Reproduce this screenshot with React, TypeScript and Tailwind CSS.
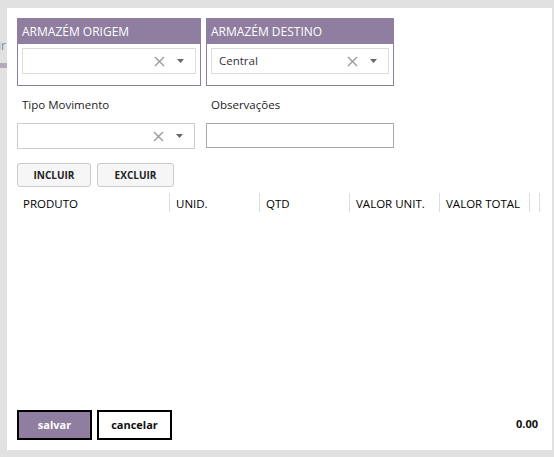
import React from 'react';

const font = { fontFamily: '"Open Sans", "Noto Sans", sans-serif' };

const ClearX = () => (
  <svg width="11" height="11" viewBox="0 0 11 11" className="text-[#9a9a9a]">
    <path d="M1 1 L10 10 M10 1 L1 10" stroke="currentColor" strokeWidth="1.4" />
  </svg>
);

const Caret = () => (
  <svg width="7" height="4" viewBox="0 0 7 4" className="text-[#666]">
    <path d="M0 0 H7 L3.5 4 Z" fill="currentColor" />
  </svg>
);

const SelectBox: React.FC<{ value?: string; className?: string }> = ({ value, className }) => (
  <div className={`flex items-center h-[26px] bg-white ${className ?? ''}`}>
    <span className="flex-1 pl-[7px] text-[11.5px] text-[#333] truncate">{value}</span>
    <ClearX />
    <span className="w-[30px] flex justify-center">
      <Caret />
    </span>
  </div>
);

const Panel: React.FC<{ title: string; value?: string; className?: string }> = ({ title, value, className }) => (
  <div className={`border border-[#8f7e9f] h-[68px] ${className ?? ''}`}>
    <div className="h-[25px] bg-[#8f7e9f] text-white text-[12px] pl-[4px] flex items-center">{title}</div>
    <div className="px-[4px] pt-[4px]">
      <SelectBox value={value} className="border border-[#dddddd]" />
    </div>
  </div>
);

const columns = [
  { label: 'PRODUTO', w: 'w-[153px]' },
  { label: 'UNID.', w: 'w-[90px]' },
  { label: 'QTD', w: 'w-[90px]' },
  { label: 'VALOR UNIT.', w: 'w-[90px]' },
  { label: 'VALOR TOTAL', w: 'w-[90px]' },
];

export default function App() {
  return (
    <div className="w-[554px] h-[457px] bg-[#e1e1e1] flex pt-[8px] pb-[7px] pr-[2px] overflow-hidden" style={font}>
      {/* page peeking behind modal */}
      <div className="w-[7px] overflow-hidden">
        <div className="mt-[29px] text-[12px] text-[#7a8a9a] -ml-[2px] whitespace-nowrap">ir</div>
        <div className="mt-[8px] h-[5px] bg-[#b3aabb]" />
      </div>

      <div className="flex-1 bg-white flex flex-col pl-[10px] pr-[11px] pt-[10px] pb-[10px]">
        {/* Warehouses */}
        <div className="flex gap-[5px]">
          <Panel title="ARMAZÉM ORIGEM" className="w-[184px]" />
          <Panel title="ARMAZÉM DESTINO" value="Central" className="w-[188px]" />
        </div>

        {/* Movement + notes */}
        <div className="flex gap-[11px] mt-[10px]">
          <div className="w-[178px]">
            <div className="h-[17px] pl-[5px] text-[11.5px] text-[#222] leading-[17px]">Tipo Movimento</div>
            <SelectBox className="mt-[10px] border border-[#cccccc]" />
          </div>
          <div className="w-[188px]">
            <div className="h-[17px] pl-[5px] text-[11.5px] text-[#222] leading-[17px]">Observações</div>
            <div className="mt-[10px] h-[25px] border border-[#aaaaaa]" />
          </div>
        </div>

        {/* Actions */}
        <div className="flex gap-[6px] mt-[14px]">
          <button className="w-[74px] h-[24px] rounded-[3px] bg-[#f6f6f6] border border-[#cccccc] text-[10px] font-bold text-[#222]">
            INCLUIR
          </button>
          <button className="w-[77px] h-[24px] rounded-[3px] bg-[#f6f6f6] border border-[#cccccc] text-[10px] font-bold text-[#222]">
            EXCLUIR
          </button>
        </div>

        {/* Grid header */}
        <div className="flex mt-[6px] h-[19px] items-center">
          {columns.map((c) => (
            <div key={c.label} className={`${c.w} h-full flex items-center pt-[3px] pl-[6px] border-r border-[#dddddd] text-[11.5px] font-medium text-black`}>
              {c.label}
            </div>
          ))}
          <div className="w-[10px] h-full border-r border-[#dddddd]" />
        </div>

        <div className="flex-1" />

        {/* Footer */}
        <div className="flex items-center">
          <button className="w-[75px] h-[30px] bg-[#8f7e9f] border-2 border-black text-white text-[11px] font-bold">
            salvar
          </button>
          <button className="ml-[5px] w-[75px] h-[30px] bg-white border-2 border-black text-[#111] text-[11px] font-bold">
            cancelar
          </button>
          <div className="flex-1 text-right pr-[3px] pb-[2px] text-[11px] font-bold text-[#111]">0.00</div>
        </div>
      </div>
    </div>
  );
}
